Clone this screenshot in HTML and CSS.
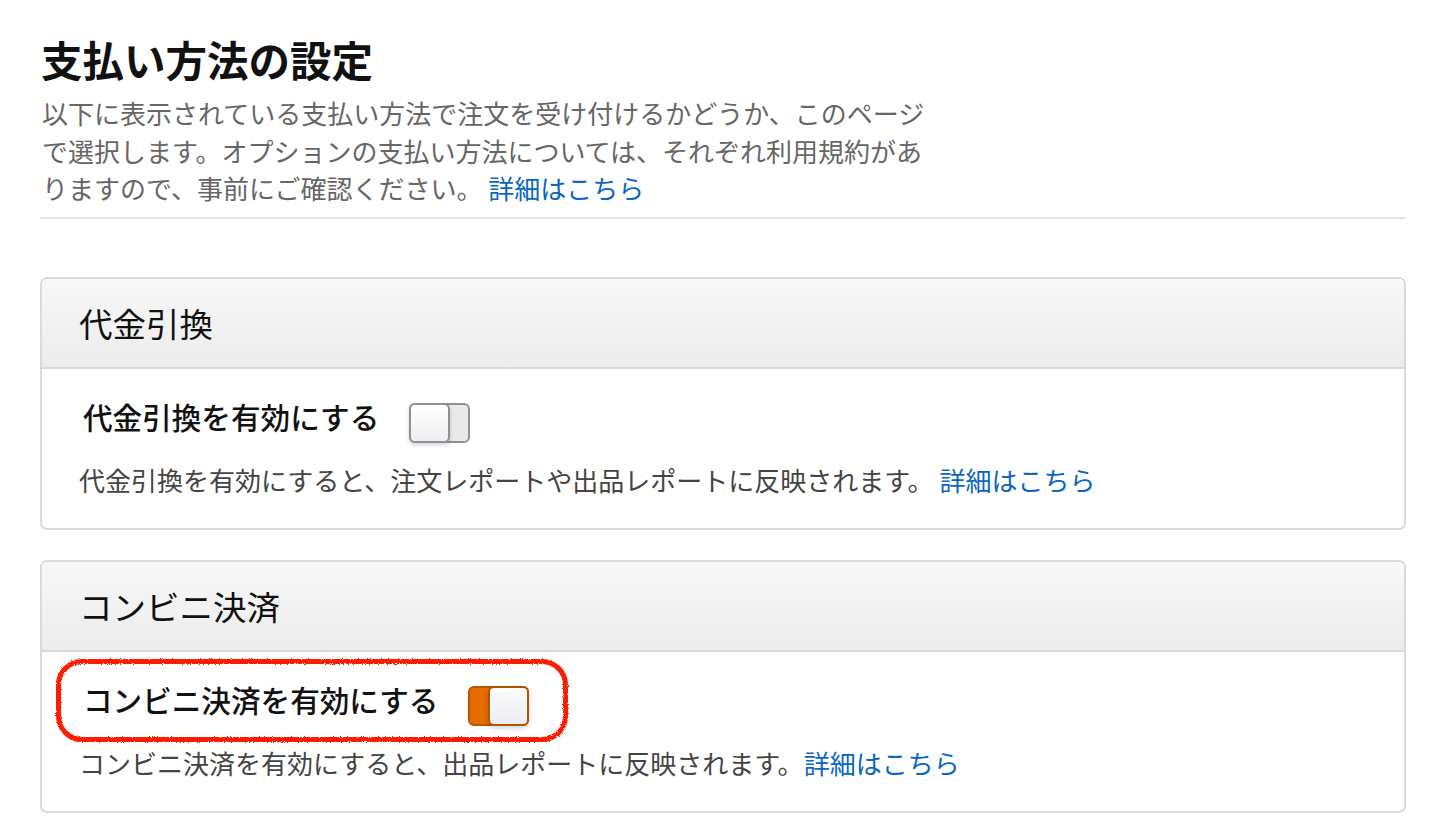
FILE: index.html
```html
<!DOCTYPE html>
<html lang="ja">
<head>
<meta charset="utf-8">
<title>支払い方法の設定</title>
<link rel="stylesheet" href="styles.css">
</head>
<body>
<svg class="defs" width="0" height="0" aria-hidden="true">
  <filter id="rough" x="-5%" y="-20%" width="110%" height="140%">
    <feTurbulence type="fractalNoise" baseFrequency="0.9" numOctaves="2" seed="3" result="noise"/>
    <feDisplacementMap in="SourceGraphic" in2="noise" scale="3"/>
  </filter>
</svg>
<main class="page">
  <h1 class="title">支払い方法の設定</h1>
  <p class="intro">以下に表示されている支払い方法で注文を受け付けるかどうか、このページで選択します。オプションの支払い方法については、それぞれ利用規約がありますので、事前にご確認ください。 <a class="link" href="#">詳細はこちら</a></p>
  <hr class="rule">

  <section class="panel">
    <div class="panel-head">代金引換</div>
    <div class="panel-body">
      <div class="option-row">
        <span class="option-label">代金引換を有効にする</span>
        <span class="toggle"><span class="knob"></span></span>
      </div>
      <p class="option-desc">代金引換を有効にすると、注文レポートや出品レポートに反映されます。 <a class="link" href="#">詳細はこちら</a></p>
    </div>
  </section>

  <section class="panel">
    <div class="panel-head">コンビニ決済</div>
    <div class="panel-body">
      <div class="option-row">
        <span class="option-label">コンビニ決済を有効にする</span>
        <span class="toggle is-on"><span class="knob"></span></span>
        <span class="highlight"></span>
      </div>
      <p class="option-desc">コンビニ決済を有効にすると、出品レポートに反映されます。<a class="link" href="#">詳細はこちら</a></p>
    </div>
  </section>
</main>
</body>
</html>
```

FILE: styles.css
```css
html, body {
  margin: 0;
  padding: 0;
  background: #ffffff;
}

body {
  font-family: "Noto Sans CJK JP", "Noto Sans", "Liberation Sans", sans-serif;
  color: #111111;
}

.defs {
  position: absolute;
  width: 0;
  height: 0;
}

.page {
  width: 1366px;
  padding: 35px 0 0 40px;
}

.title {
  margin: 0 0 0 1px;
  font-size: 41.5px;
  line-height: 48px;
  font-weight: 600;
  color: #111111;
}

.intro {
  margin: 11px 0 0 2px;
  width: 900px;
  font-size: 26px;
  line-height: 37.5px;
  color: #666666;
}

.link {
  color: #0a66c2;
  text-decoration: none;
}

.rule {
  margin: 10px 0 0 0;
  border: 0;
  height: 2px;
  background: #e4e4e4;
}

.panel {
  margin-top: 58px;
  border: 2px solid #dadada;
  border-radius: 7px;
  overflow: hidden;
}

.panel + .panel {
  margin-top: 30px;
}

.panel-head {
  height: 88px;
  display: flex;
  align-items: center;
  padding: 0 37px;
  font-size: 33.5px;
  line-height: 40px;
  color: #111111;
  background: linear-gradient(#f8f8f8, #ececec);
  border-bottom: 2px solid #dadada;
}

.panel-body {
  padding: 28px 37px 30px;
}

.option-row {
  position: relative;
  display: flex;
  align-items: flex-start;
  gap: 30px;
  padding-left: 4px;
}

.option-label {
  font-size: 29.6px;
  line-height: 40px;
  font-weight: 500;
  color: #111111;
}

.toggle {
  margin-top: 6px;
  width: 61px;
  height: 40px;
  box-sizing: border-box;
  display: flex;
  justify-content: flex-start;
  border: 2px solid #8e9197;
  border-radius: 6px;
  background: #e9e9ea;
}

.knob {
  width: 41px;
  height: 40px;
  margin: -2px;
  box-sizing: border-box;
  border: 2px solid #8e9197;
  border-radius: 6px;
  background: linear-gradient(#ffffff, #eeeff1);
  box-shadow: 0 2px 4px rgba(0, 0, 0, 0.18);
}

.toggle.is-on {
  justify-content: flex-end;
  border-color: #b45500;
  background: #e46c00;
}

.toggle.is-on .knob {
  border-color: #b45500;
  background: linear-gradient(#fbfbfc, #ecedf0);
}

.highlight {
  position: absolute;
  left: -23px;
  top: -21px;
  width: 512px;
  height: 83px;
  box-sizing: border-box;
  border: 5px solid #ff1a00;
  border-radius: 26px;
  filter: url(#rough);
  pointer-events: none;
}

.option-desc {
  margin: 19px 0 0 0;
  font-size: 26px;
  line-height: 36px;
  color: #444444;
}
```
